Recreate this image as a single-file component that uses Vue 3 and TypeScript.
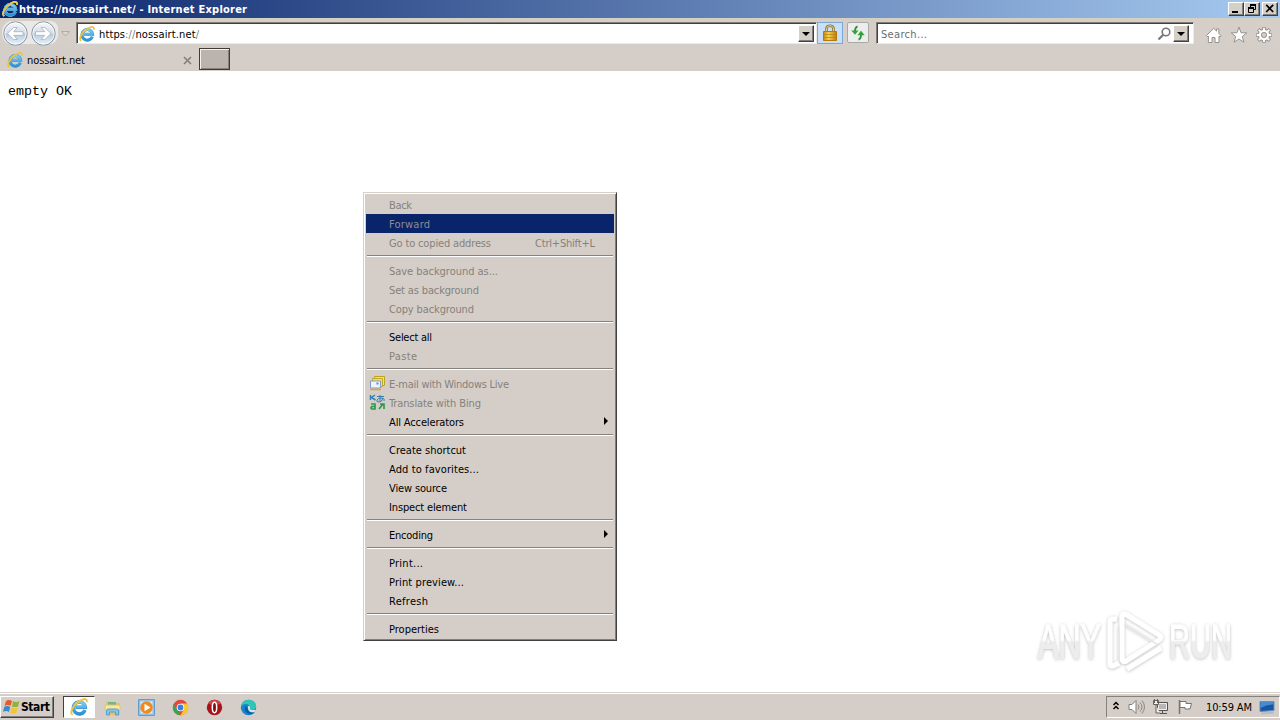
<script setup lang="ts">
interface MenuItem {
  label: string
  width: number
  enabled?: boolean
  active?: boolean
  shortcut?: string
  icon?: 'mail' | 'translate'
  submenu?: boolean
}

const groups: MenuItem[][] = [
  [
    { label: 'Back', width: 23 },
    { label: 'Forward', width: 41, active: true },
    { label: 'Go to copied address', width: 102, shortcut: 'Ctrl+Shift+L' },
  ],
  [
    { label: 'Save background as...', width: 109 },
    { label: 'Set as background', width: 90 },
    { label: 'Copy background', width: 85 },
  ],
  [
    { label: 'Select all', width: 43, enabled: true },
    { label: 'Paste', width: 28 },
  ],
  [
    { label: 'E-mail with Windows Live', width: 120, icon: 'mail' },
    { label: 'Translate with Bing', width: 92, icon: 'translate' },
    { label: 'All Accelerators', width: 75, enabled: true, submenu: true },
  ],
  [
    { label: 'Create shortcut', width: 77, enabled: true },
    { label: 'Add to favorites...', width: 90, enabled: true },
    { label: 'View source', width: 58, enabled: true },
    { label: 'Inspect element', width: 78, enabled: true },
  ],
  [{ label: 'Encoding', width: 44, enabled: true, submenu: true }],
  [
    { label: 'Print...', width: 34, enabled: true },
    { label: 'Print preview...', width: 75, enabled: true },
    { label: 'Refresh', width: 39, enabled: true },
  ],
  [{ label: 'Properties', width: 50, enabled: true }],
]
</script>

<template>
  <div class="screen">
    <svg class="defs" width="0" height="0">
      <defs>
        <linearGradient id="ieBlue" x1="0" y1="0" x2="0" y2="1">
          <stop offset="0" stop-color="#7ccdf5" /><stop offset="1" stop-color="#2a92d8" />
        </linearGradient>
        <linearGradient id="orb" x1="0" y1="0" x2="0" y2="1">
          <stop offset="0" stop-color="#f8f9fb" /><stop offset=".48" stop-color="#d5dce5" />
          <stop offset=".52" stop-color="#b9c8d9" /><stop offset="1" stop-color="#e8f5ff" />
        </linearGradient>
        <linearGradient id="gold" x1="0" y1="0" x2="1" y2="0">
          <stop offset="0" stop-color="#c48914" /><stop offset=".4" stop-color="#f8ce49" /><stop offset="1" stop-color="#bd7d0b" />
        </linearGradient>
        <symbol id="ie" viewBox="0 0 16 16">
          <path d="M13.3 10.7A5.3 5.3 0 1 1 13.6 8.3H5" fill="none" stroke="#3a94c8" stroke-width="3.1" />
          <path d="M13.2 10.7A5.2 5.2 0 1 1 13.5 8.2H5" fill="none" stroke="url(#ieBlue)" stroke-width="2.3" />
          <path d="M2.3 14.9C-.9 13 3.1 5.8 8.7 2.5c4.3-2.5 7-2 6.1 1.3" fill="none" stroke="#f0c33a" stroke-width="1.7" />
        </symbol>
      </defs>
    </svg>

    <header class="titlebar">
      <svg class="ie-icon"><use href="#ie" /></svg>
      <svg class="title" width="232" height="18"><text x="0" y="13" textLength="228">https://nossairt.net/ - Internet Explorer</text></svg>
      <div class="window-buttons">
        <span class="bevel"><svg width="14" height="12"><path d="M3 8h6v2H3z" /></svg></span>
        <span class="bevel"><svg width="14" height="12"><path d="M5 1h6v2H5zM3 4h6v2H3z" /><path d="M5.5 4V1.500h5v5H9M3.500 5v4.500h5V5" fill="none" stroke="#000" /></svg></span>
        <span class="bevel close"><svg width="14" height="12"><path d="m3.200 1.800 7 7.200m0-7.200-7 7.200" fill="none" stroke="#000" stroke-width="1.700" /></svg></span>
      </div>
    </header>

    <nav class="navbar">
      <svg class="history" width="74" height="30" viewBox="0 0 74 30">
        <path d="M10 3h40q6 0 8 6v9q-2 8-8 8H12Q2 26 2 14q0-8 8-11" fill="#ebe9e7" />
        <g stroke="#8795a4">
          <circle cx="15.500" cy="15.500" r="11.700" fill="url(#orb)" /><circle cx="43.500" cy="15.500" r="11.700" fill="url(#orb)" />
        </g>
        <g fill="none" stroke="#fff" stroke-opacity=".75">
          <circle cx="15.500" cy="15.500" r="10.600" /><circle cx="43.500" cy="15.500" r="10.600" />
        </g>
        <path d="m7.500 15.500 6.200-6h3.600l-3.600 4.200H23v3.600h-9.300l3.600 4.200h-3.600zM51 15.500l-6.200-6h-3.600l3.600 4.200h-9.300v3.600h9.300l-3.600 4.200h3.600z" fill="#fff" stroke="#a2b1c1" stroke-width=".8" />
        <path d="M61.500 13.500h8l-4 4.400z" fill="#dcd8d2" stroke="#b1aca6" />
      </svg>
      <div class="field address">
        <svg class="ie-icon"><use href="#ie" /></svg>
        <svg class="url" width="110" height="18"><text x="0" y="13" textLength="100"><tspan>https</tspan><tspan class="muted">://</tspan>nossairt.net<tspan class="muted">/</tspan></text></svg>
        <span class="bevel drop"><i></i></span>
      </div>
      <span class="lock">
        <svg width="16" height="18"><path d="M4.500 8V4.700q0-3 3.500-3t3.500 3V8" fill="none" stroke="#8f7334" stroke-width="2.600" /><path d="M4.500 8V4.700q0-3 3.500-3t3.500 3V8" fill="none" stroke="#e3d094" /><path d="M1.500 7.500h13v9h-13z" fill="url(#gold)" stroke="#b37a13" /><path d="M2 10.500h12M2 13.500h12" stroke="#b77c13" stroke-opacity=".65" /></svg>
      </span>
      <span class="refresh">
        <svg width="16" height="16"><path d="M7.500 1.500Q5 2 5 7M8.500 14.500Q11 14 11 9" fill="none" stroke="#2e8f32" stroke-width="1.800" /><path d="M1.300 5.500h7.200L5 9.800zM7.500 10.200 11 5.700l3.700 4.500z" fill="#35a139" /></svg>
      </span>
      <div class="field search">
        <svg class="hint" width="60" height="18"><text x="0" y="13" textLength="46">Search...</text></svg>
        <svg class="magnifier" width="15" height="16"><circle cx="9" cy="6" r="3.800" fill="none" stroke="#777" stroke-width="1.600" /><path d="m6.200 8.800-4.700 4.700" stroke="#777" stroke-width="2.200" /></svg>
        <span class="bevel drop"><i></i></span>
      </div>
      <div class="tools">
        <svg width="18" height="18"><path d="m1.500 9.500 7.200-7.200 2.800 2.800V3h2.400v4.500l2.300 2.300-1.200 1.100-1-.9v6.500h-4v-5H7v5H3.400V10l-.9.900z" fill="#fff" stroke="#96928e" /></svg>
        <svg width="18" height="18"><path d="m9 1.200 2 5.500 5.800.2-4.500 3.600 1.600 5.700L9 13l-4.900 3.200 1.600-5.700L1.200 6.900 7 6.700z" fill="#fff" stroke="#96928e" /></svg>
        <svg width="18" height="18"><g transform="translate(9 9)"><circle r="6" fill="#fff" stroke="#96928e" /><path d="M0-8V8M-8 0H8M-5.700-5.700 5.700 5.700M-5.700 5.700 5.700-5.700" stroke="#96928e" stroke-width="3.600" /><path d="M0-7.300V7.300M-7.300 0H7.300M-5.200-5.200 5.200 5.200M-5.200 5.200 5.200-5.200" stroke="#fff" stroke-width="1.800" /><circle r="5.200" fill="#fff" /><circle r="2.600" fill="#d4cec9" stroke="#96928e" /></g></svg>
      </div>
    </nav>

    <div class="tabs">
      <div class="tab">
        <svg class="ie-icon"><use href="#ie" /></svg>
        <svg class="tab-title" width="70" height="18"><text x="0" y="13" textLength="58">nossairt.net</text></svg>
        <svg class="tab-close" width="9" height="9"><path d="m1 1 7 7m0-7-7 7" stroke="#85817d" stroke-width="1.700" /></svg>
      </div>
      <div class="new-tab"></div>
    </div>

    <main class="page">
      <pre>empty OK</pre>
      <svg class="watermark" width="220" height="78" viewBox="1030 605 220 78">
        <defs>
          <linearGradient id="mark" gradientUnits="userSpaceOnUse" x1="0" y1="640" x2="0" y2="642">
            <stop offset="0" stop-color="#fff" /><stop offset="1" stop-color="#ededed" />
          </linearGradient>
          <filter id="markShade" x="-10%" y="-10%" width="120%" height="125%"><feDropShadow dx="0" dy=".7" stdDeviation="1.700" flood-color="#555" flood-opacity=".42" /></filter>
        </defs>
        <g filter="url(#markShade)">
          <g class="brand">
            <text x="1038" y="658" textLength="63" lengthAdjust="spacingAndGlyphs">ANY</text>
            <text x="1169" y="658" textLength="63" lengthAdjust="spacingAndGlyphs">RUN</text>
          </g>
          <g fill="none" stroke="#fff" stroke-width="5" stroke-linejoin="round">
            <path d="M1117 619h-4q-3 0-3 4v40q0 5 5 2l4-2" />
            <path d="M1122 658v-41q0-5 5-2l32 20q4 2 0 5l-33 21q-4 2-4-3" />
            <path d="m1127 669 34-21" />
          </g>
          <path d="m1124 624 33 20M1119 626v37" fill="none" stroke="#e7e7e7" stroke-width="1.500" />
        </g>
      </svg>
    </main>

    <div class="menu">
      <div class="menu-body">
        <div v-for="(group, index) in groups" :key="index" class="group">
          <div v-for="item in group" :key="item.label" class="item" :class="{ enabled: item.enabled, active: item.active }">
            <span class="item-icon">
              <svg v-if="item.icon === 'mail'" width="17" height="16"><path d="M5.500 1.500h10v9h-10z" fill="#eae580" stroke="#bba51d" /><path d="M3.500 3.500h10v8h-10z" fill="#f2dc6c" stroke="#c5a823" /><path d="M1.500 6h10v7h-10z" fill="#eef4fc" stroke="#7f9bd0" /><path d="M7.500 7.500h2v2h-2z" fill="#5b86cc" /><path d="M1 14.500h11" stroke="#e9a03b" stroke-width="1.500" /></svg>
              <svg v-if="item.icon === 'translate'" width="17" height="17"><path d="M1.500 1v5M6 1 2.500 3.500 6.500 6" fill="none" stroke="#2b83bb" stroke-width="1.500" /><path d="M8 2.500h7M11 1v6M14 4q-1 4-4 4t-2-2q1-2 4-2 4 0 3 3" fill="none" stroke="#397dad" /><path d="M2 10h4v5H3q-2-1 0-2.500h3M10 15l4-5m-3 0h4v5" fill="none" stroke="#269a4a" stroke-width="1.600" /></svg>
            </span>
            <svg class="item-text" width="146" height="19"><text x="0" y="14" :textLength="item.width">{{ item.label }}</text></svg>
            <svg v-if="item.shortcut" width="62" height="19"><text x="0" y="14" textLength="60">{{ item.shortcut }}</text></svg>
            <svg v-if="item.submenu" class="arrow" width="5" height="8"><path d="m0 0 4 4-4 4z" /></svg>
          </div>
        </div>
      </div>
    </div>

    <footer class="taskbar">
      <div class="start">
        <svg width="18" height="18" viewBox="0 0 18 18"><path d="M3 3q3-2 6 0L7.500 8q-3-1.800-6 0z" fill="#ed582b" /><path d="M10 3q3 2 6.500 0L15 8.500q-3 1-6 0z" fill="#8db53c" /><path d="M1.200 9q3-2 6 0L6 14q-3-2-6 0z" fill="#388bc5" /><path d="M8.600 9.200q3 2 6.200 0L13.300 15q-3 1-6 0z" fill="#f4c434" /></svg>
        <svg width="32" height="18"><text x="0" y="13" textLength="29">Start</text></svg>
      </div>
      <div class="apps">
        <span class="app pressed"><svg class="ie-icon"><use href="#ie" /></svg></span>
        <span class="app"><svg width="17" height="17"><path d="M2 4V2.500h6L9.500 4H16v12H2z" fill="#e2c365" /><path d="M4 3h8v3H4z" fill="#72b881" /><path d="M1 6h15v5H1z" fill="#f9e8a2" stroke="#dec46e" /><path d="M2.500 16v-4q0-2 2-2h8q2 0 2 2v4h-3v-3h-6v3z" fill="#86c4e8" stroke="#5a9dcc" /></svg></span>
        <span class="app"><svg width="17" height="17"><path d="M.500.500h16v16H.500z" fill="#8ec2ea" stroke="#659dca" /><path d="M2.500 2.500h12v12h-12z" fill="#ddecf5" /><circle cx="8.500" cy="8.500" r="6.200" fill="#f18a1d" /><path d="m6.500 4.700 6 3.800-6 3.800z" fill="#fff" /></svg></span>
        <span class="app"><svg width="17" height="17"><circle cx="8.500" cy="8.500" r="7.700" fill="#e6453a" /><path d="M1.800 4.700 8.500 16.200A7.700 7.700 0 0 1 1.800 4.700" fill="#33a852" /><path d="M8.500 4.500h6.700a7.700 7.700 0 0 1-6.700 11.700l3.500-6z" fill="#fbc729" /><circle cx="8.500" cy="8.500" r="3.800" fill="#fff" /><circle cx="8.500" cy="8.500" r="2.900" fill="#397ee6" /></svg></span>
        <span class="app"><svg width="17" height="17"><circle cx="8.500" cy="8.500" r="7.700" fill="#a81219" /><path d="M2 4.500a7.500 7.500 0 0 1 13 0q-7 3-13 0" fill="#cf4145" /><ellipse cx="8.500" cy="8.500" rx="2.200" ry="5.200" fill="#8e0d12" stroke="#fff" stroke-width="1.500" /></svg></span>
        <span class="app"><svg width="17" height="17"><circle cx="8.500" cy="8.500" r="7.700" fill="#1686cf" /><path d="M1.200 7Q2 .8 9 .8q7 .5 7.200 6.800-.5 4-5.200 3.400-3 0-2-2 1-4-3-4-3.500 0-4.800 2" fill="#32c5b5" /><path d="M5.800 6.500q-3 5 2 8 4 2 6.800-1-6.500 1-6.600-3.500" fill="#135aa5" /><path d="M8 7q3 0 1.800 2.500-.2 1.500 3.200 1.500h3L14.500 13Q8 14 8 9z" fill="#d9e5e8" /></svg></span>
      </div>
      <div class="tray">
        <svg class="chevron" width="10" height="14"><path d="m2.500 5 2.500-2.500L7.500 5M2.500 9 5 6.500 7.500 9" fill="none" stroke="#000" stroke-width="1.500" /></svg>
        <svg width="19" height="18"><path d="M2 6.500h3l4-4v13l-4-4H2z" fill="#fff" stroke="#827e7b" /><path d="M11 6.500q2 2.500 0 5M13 4.500q4 4.500 0 9M15 2.500q5 6.500 0 13" fill="none" stroke="#8a8683" /></svg>
        <svg width="18" height="18"><path d="M5.500 4.500h10v8h-10z" fill="#b9b7b5" stroke="#55524f" /><path d="M6.500 5.500h8v6h-8z" fill="none" stroke="#eee" /><path d="M8 15.500h7M10.500 13v2" stroke="#55524f" /><path d="M1.500 2.500h5v4h-5zM4 7v8h4" fill="#eee" stroke="#65615d" /><path d="M2.500 1v4M5.500 1v4" stroke="#65615d" /></svg>
        <svg width="18" height="18"><path d="M3.500 2v14" stroke="#777470" stroke-width="1.500" /><path d="M4 3.500h6v2h5.500L14 11H9V9.500H4z" fill="#fff" stroke="#777470" /></svg>
        <svg class="clock" width="50" height="18"><text x="0" y="13" textLength="46">10:59 AM</text></svg>
        <svg class="desktop" width="17" height="16"><path d="M1 2.500 15 2.500v9L1 12.500z" fill="#1755a6" stroke="#718fae" /><path d="M1.500 3h13v2.500Q8 5 1.500 9z" fill="#468ccf" /><path d="m2 14.500 13-1" stroke="#aebdca" stroke-width="2" /></svg>
      </div>
    </footer>
  </div>
</template>

<style>
body { margin: 0; overflow: hidden; }
</style>

<style scoped>
* { box-sizing: border-box; }
.screen { position: relative; width: 1280px; height: 720px; display: flex; flex-direction: column; overflow: hidden; background: #fff; color: #000; font-family: "DejaVu Sans Condensed", "DejaVu Sans", sans-serif; font-stretch: condensed; font-size: 11px; }
svg { display: block; flex: none; }
text { fill: currentColor; white-space: pre; }
.muted { fill: #808080; }
.defs { position: absolute; }
.ie-icon { width: 16px; height: 16px; flex: none; }
.titlebar { height: 18px; flex: none; display: flex; align-items: center; padding: 0 2px; background: linear-gradient(90deg, #0a246a, #a6caf0); color: #fff; font-weight: bold; }
.titlebar .ie-icon { filter: drop-shadow(0 0 .6px #fff); }
.title { margin-left: 1px; }
.bevel { flex: none; display: flex; background: #d4d0c8; border: 1px solid; border-color: #fff #404040 #404040 #fff; box-shadow: inset -1px -1px #808080; }
.window-buttons { display: flex; margin-left: auto; }
.window-buttons .bevel { width: 16px; height: 14px; }
.window-buttons .close { margin-left: 2px; }
.navbar { height: 30px; flex: none; display: flex; align-items: flex-start; background: linear-gradient(#d4d0c4, #d7cec9 8px, #d4cec9); }
.field { height: 22px; margin-top: 4px; display: flex; align-items: center; background: #fff; border: 1px solid; border-color: #817d76 #eeebe7 #eeebe7 #817d76; box-shadow: inset 1px 1px #443f3b; }
.address { width: 741px; margin-left: 2px; padding: 1px 2px 0 2px; }
.url { margin-left: 4px; }
.drop { width: 16px; height: 17px; margin-left: auto; align-items: center; justify-content: center; }
.drop i { border: 4px solid transparent; border-top-color: #000; border-bottom: 0; }
.lock { width: 26px; height: 22px; margin-top: 4px; display: flex; justify-content: center; align-items: center; border: 1px solid #7ba7d6; background: #c9def7; }
.refresh { width: 22px; height: 21px; margin: 4px 0 0 4px; display: flex; justify-content: center; align-items: center; border: 1px solid #aaa8a5; border-radius: 2px; background: #eceeed; }
.search { width: 318px; margin-left: 7px; padding: 1px 4px 0 4px; color: #6d6d6d; }
.magnifier { margin-left: auto; }
.search .drop { margin-left: 1px; }
.tools { display: flex; gap: 7px; margin: 8px 0 0 11px; }
.tabs { height: 23px; flex: none; display: flex; background: #d5cec8; }
.tab { width: 199px; display: flex; align-items: center; padding: 1px 7px 0 7px; }
.tab-title { margin-left: 4px; }
.tab-close { margin-left: auto; }
.new-tab { width: 31px; height: 22px; background: #bbb3ae; border: 1px solid #3f3b38; box-shadow: inset 1px 1px #f6f1ed, inset -1px -1px #85807b; }
.page { flex: 1; position: relative; background: #fff; }
.page pre { margin: 0; padding: 13px 8px; font: 13.333px/15px "Liberation Mono", monospace; }
.watermark { position: absolute; left: 1030px; top: 534px; }
.brand { font: 48px "Liberation Sans", sans-serif; stroke: url(#mark); stroke-width: 1px; }
.brand text { fill: url(#mark); }
.menu { position: absolute; left: 363px; top: 192px; width: 254px; height: 449px; padding: 1px; border: 1px solid; border-color: #d4d0c8 #404040 #404040 #d4d0c8; background: #d5cec8; box-shadow: inset 1px 1px #fff, inset -1px -1px #808080; }
.menu-body { padding: 1px; }
.group + .group::before { content: ''; display: block; height: 0; margin: 3px 1px 4px; border-top: 1px solid #85817c; border-bottom: 1px solid #fff; }
.item { height: 19px; display: flex; align-items: center; color: #85817c; }
.item.enabled { color: #000; }
.item.active { background: #0a246a; color: #8b8c91; }
.item-icon { width: 23px; height: 19px; flex: none; padding: 1px 0 0 3px; }
.arrow { margin-left: 69px; margin-top: -2px; }
.taskbar { height: 28px; flex: none; display: flex; align-items: center; background: #d5cec8; border-top: 1px solid #d5d0c8; box-shadow: inset 0 1px #fff; padding-top: 1px; }
.start { width: 54px; height: 22px; padding: 0 2px; display: flex; align-items: center; border: 1px solid; border-color: #fff #404040 #404040 #fff; box-shadow: inset -1px -1px #808080; font-weight: bold; font-size: 12px; }
.apps { display: flex; gap: 2px; margin-left: 9px; }
.app { width: 32px; height: 22px; display: flex; align-items: center; justify-content: center; padding-right: 1px; }
.app.pressed { background: #fff; border: 1px solid; border-color: #404040 #fff #fff #404040; }
.pressed .ie-icon { width: 18px; height: 18px; }
.tray { width: 174px; height: 22px; margin-left: auto; padding: 0 1px 0 4px; display: flex; align-items: center; gap: 6px; border: 1px solid; border-color: #85817c #fff #fff #85817c; }
.clock { margin-left: 6px; }
.desktop { margin-left: -3px; }
</style>
